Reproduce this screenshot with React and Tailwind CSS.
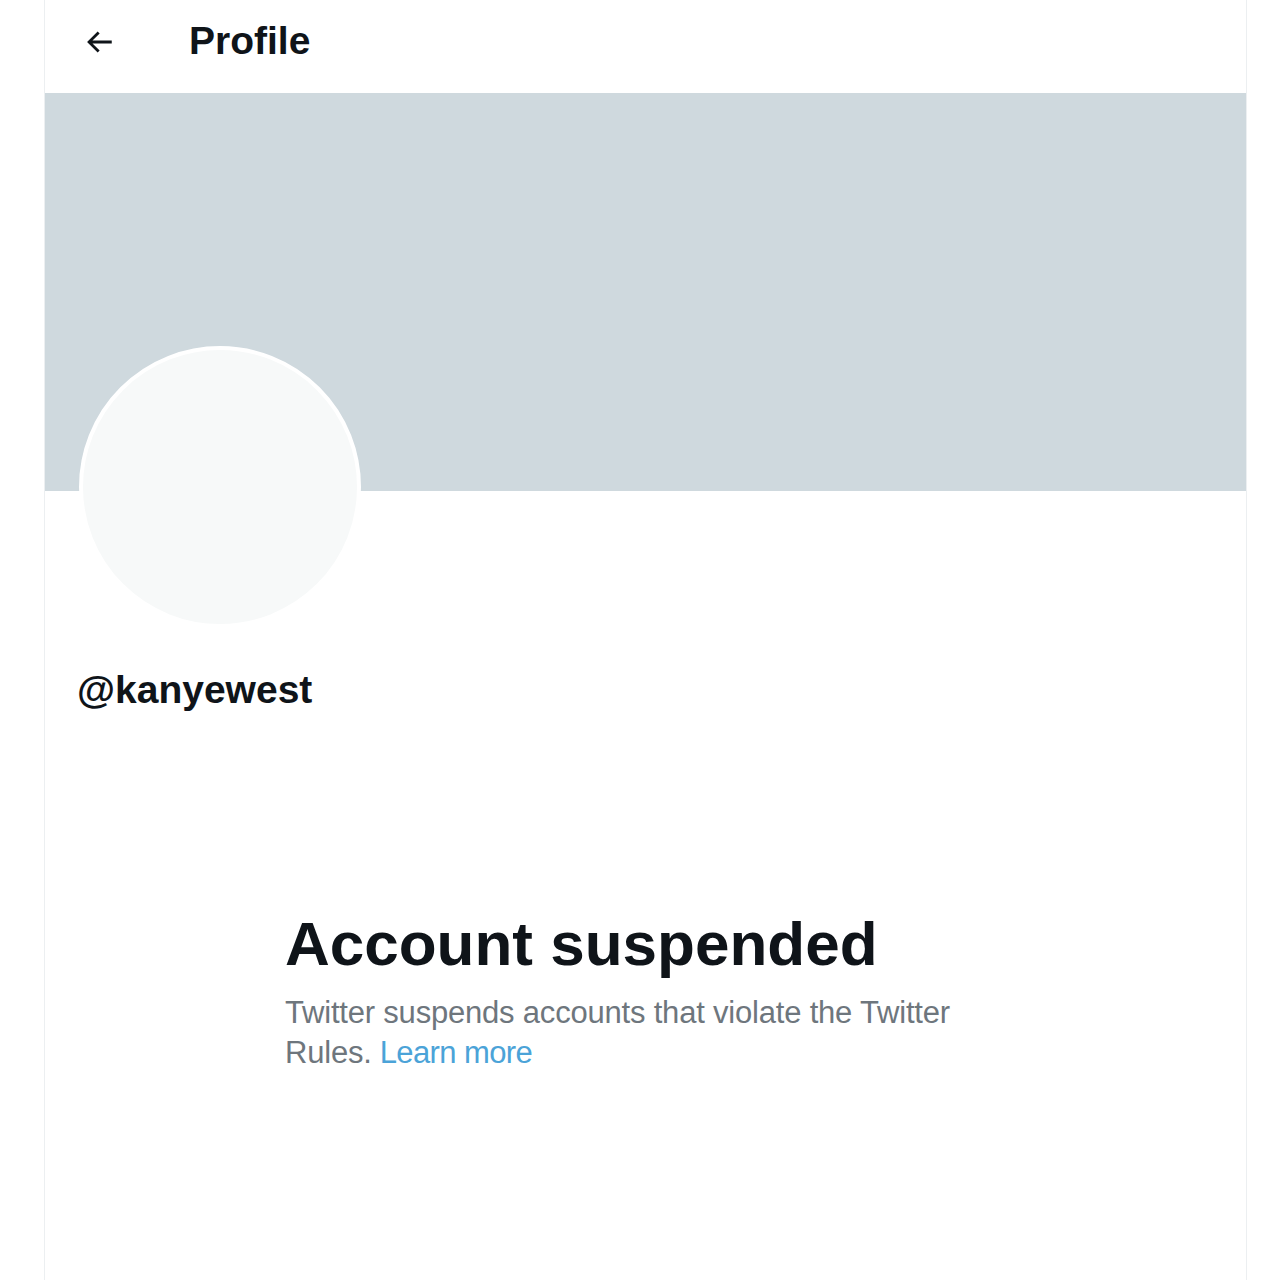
import React from "react";

export default function App() {
  return (
    <div
      className="w-full h-[1280px] bg-white overflow-hidden flex"
      style={{ fontFamily: '"Liberation Sans", Arial, sans-serif' }}
    >
      <div className="ml-[44px] w-[1203px] h-full border-x border-[#eceff1] flex flex-col">
        <header className="h-[93px] flex items-center pl-[37px] pb-[10px]">
          <svg width="34" height="34" viewBox="0 0 24 24" className="text-[#0f1419]">
            <path
              d="M7.414 13l5.043 5.04-1.414 1.42L3.586 12l7.457-7.46 1.414 1.42L7.414 11H21v2H7.414z"
              fill="currentColor"
            />
          </svg>
          <h1 className="ml-[73px] text-[39px] font-bold text-[#0f1419]">Profile</h1>
        </header>
        <div className="h-[398px] bg-[#cfd9de] shrink-0" />
        <div className="pl-[34px] -mt-[145px]">
          <div className="w-[282px] h-[282px] rounded-full bg-[#f7f9f9] border-[4px] border-white" />
        </div>
        <div className="pl-[32px] mt-[40px] text-[39px] font-bold text-[#0f1419] leading-[44px]">
          @kanyewest
        </div>
        <div className="pl-[240px] mt-[196px]">
          <h2 className="text-[62px] font-bold text-[#0f1419] leading-[72px]">
            Account suspended
          </h2>
          <div className="mt-[13px] text-[31px] leading-[40px] text-[#6e767d] tracking-[-0.2px]">
            <div>Twitter suspends accounts that violate the Twitter</div>
            <div className="flex gap-[8px]">
              <span>Rules.</span>
              <span className="text-[#4ba3d8] tracking-[-0.6px]">Learn more</span>
            </div>
          </div>
        </div>
      </div>
    </div>
  );
}
